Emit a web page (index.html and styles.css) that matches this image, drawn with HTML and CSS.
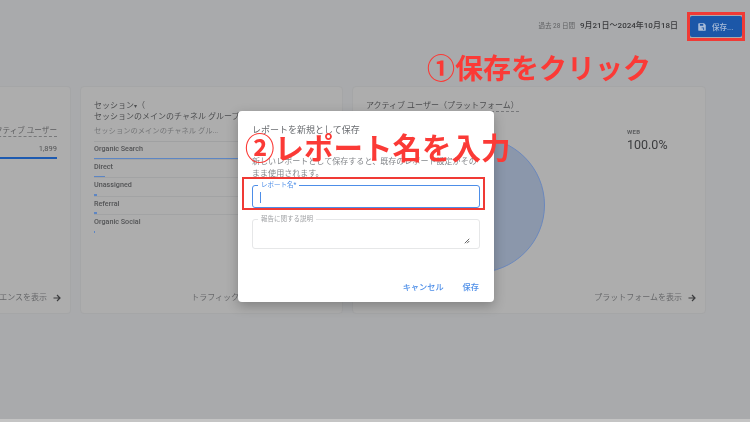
FILE: index.html
```html
<!DOCTYPE html>
<html lang="ja">
<head>
<meta charset="utf-8">
<title>レポートを新規として保存</title>
<link rel="stylesheet" href="styles.css">
</head>
<body>
<div class="page">
  <header class="top">
    <span class="range-label">過去 28 日間</span>
    <span class="range-value">9月21日～2024年10月18日</span>
    <div class="save-outline">
      <button class="save-btn">
        <svg class="save-icon" viewBox="0 0 24 24"><path d="M3 5a2 2 0 0 1 2-2h12l4 4v12a2 2 0 0 1-2 2H5a2 2 0 0 1-2-2z" fill="#a9bcd8"/><path d="M7 5h8v4H7zM11 13h6v6h-2v-4h-4z" fill="#1c57a8"/></svg>
        <span>保存...</span>
      </button>
    </div>
  </header>
  <main class="cards">
    <section class="card card-a">
      <div class="a-head">アクティブ ユーザー</div>
      <div class="a-value">1,899</div>
      <div class="a-bar"></div>
      <div class="card-foot"><span>オーディエンスを表示</span><svg class="arrow" viewBox="0 0 8 8"><path d="M.5 4h6M4 1l3 3-3 3" fill="none" stroke="#3c3d3f" stroke-width="1.2"/></svg></div>
    </section>
    <section class="card card-b">
      <h2 class="b-title">セッション<span class="caret">▾</span>（<br>セッションのメインのチャネル グループ</h2>
      <div class="b-sub">セッションのメインのチャネル グル...</div>
      <ul class="rows">
        <li class="row"><span>Organic Search</span><i class="bar bar-1"></i></li>
        <li class="row"><span>Direct</span><i class="bar bar-2"></i></li>
        <li class="row"><span>Unassigned</span><i class="bar bar-3"></i></li>
        <li class="row"><span>Referral</span><i class="bar bar-3"></i></li>
        <li class="row"><span>Organic Social</span><i class="bar bar-4"></i></li>
      </ul>
      <div class="card-foot"><span>トラフィック獲得のレポートを表示</span><svg class="arrow" viewBox="0 0 8 8"><path d="M.5 4h6M4 1l3 3-3 3" fill="none" stroke="#3c3d3f" stroke-width="1.2"/></svg></div>
    </section>
    <section class="card card-c">
      <h2 class="c-title">アクティブ ユーザー（プラットフォーム）</h2>
      <div class="c-body">
        <div class="pie"></div>
        <div class="legend"><div class="legend-key">WEB</div><div class="legend-val">100.0%</div></div>
      </div>
      <div class="card-foot"><span>プラットフォームを表示</span><svg class="arrow" viewBox="0 0 8 8"><path d="M.5 4h6M4 1l3 3-3 3" fill="none" stroke="#3c3d3f" stroke-width="1.2"/></svg></div>
    </section>
  </main>
</div>
<div class="strip"></div>

<div class="dialog">
  <h1 class="d-title">レポートを新規として保存</h1>
  <p class="d-text">新しいレポートとして保存すると、既存のレポート設定がそのまま使用されます。</p>
  <div class="field field-name">
    <label class="f-label f-active">レポート名*</label>
    <span class="cursor"></span>
  </div>
  <div class="field field-desc">
    <label class="f-label">報告に関する説明</label>
    <svg class="grip" viewBox="0 0 8 8"><path d="M7 1 1 7M7 4 4 7" stroke="#555" stroke-width="1.2"/></svg>
  </div>
  <div class="d-actions"><span>キャンセル</span><span>保存</span></div>
</div>

<div class="note note-1">①保存をクリック</div>
<div class="note note-2">②レポート名を入力</div>
<div class="box box-name"></div>
</body>
</html>
```
FILE: styles.css
```css
* { box-sizing: border-box; }
html, body { margin: 0; height: 100%; overflow: hidden; }
html { background: #a9aaac; }
body {
  width: 750px; height: 422px; position: relative;
  background: #a9aaac;
  font-family: Roboto, "Noto Sans CJK JP", sans-serif;
  color: #3f4042;
  filter: blur(.35px);
}
.page { height: 419px; }
.strip { height: 3px; background: #c4c4c4; }

.top {
  height: 86px; padding: 12px 5px 0 0;
  display: flex; justify-content: flex-end; align-items: flex-start;
}
.range-label { font-size: 6.5px; line-height: 28px; color: #5f6062; margin-right: 5px; }
.range-value { font-size: 8px; line-height: 28px; font-weight: 500; color: #38393b; margin-right: 9px; }
.save-outline { border: 3px solid #f03a35; padding: 1px 0; width: 58px; height: 29px; }
.save-btn {
  width: 52px; height: 21px; border: 0; border-radius: 2px; padding: 0 0 0 7px;
  background: #1c57a8; color: #a9bcd8;
  display: flex; align-items: center; gap: 5px;
  font: 500 7.5px Roboto, "Noto Sans CJK JP", sans-serif;
}
.save-icon { width: 10px; height: 10px; }

.cards { display: flex; gap: 9px; }
.card {
  height: 228px; background: #adadad; border: 1px solid #a5a6a7; border-radius: 4px;
  position: relative; flex: none;
}
.card-a { width: 72px; margin-left: -1px; border-left: 0; border-radius: 0 4px 4px 0; overflow: hidden; }
.card-b { width: 263px; padding: 13px 13px; }
.card-c { width: 354px; padding: 13px 13px; }

.a-head {
  position: absolute; right: 13px; top: 38px; white-space: nowrap;
  font-size: 7.6px; line-height: 11px; color: #5c5d5f; border-bottom: 1px dashed #77787a;
}
.a-value { position: absolute; right: 13px; top: 57px; font-size: 7.5px; line-height: 10px; color: #525355; }
.a-bar { position: absolute; left: 0; right: 13px; top: 70px; height: 1.5px; background: #1d5ab0; }
.card-foot {
  position: absolute; right: 9px; bottom: 9px; white-space: nowrap;
  display: flex; align-items: center; gap: 6px;
  font-size: 8px; line-height: 12px; color: #68696b;
}
.arrow { width: 8px; height: 8px; }

.b-title { margin: 0; font-size: 8px; font-weight: 400; line-height: 11px; color: #4c4d4f; white-space: nowrap; }
.caret { font-size: 6px; }
.b-sub { font-size: 7.3px; line-height: 11px; margin-top: 3px; padding-bottom: 5px; color: #747577; border-bottom: 1px solid #a0a1a2; }
.rows { list-style: none; margin: 0; padding: 0; }
.row {
  height: 18.2px; padding-top: 2px; position: relative;
  font-size: 7.2px; font-weight: 500; line-height: 10px; color: #525355;
  border-bottom: 1px solid #a2a3a4;
}
.row:last-child { border-bottom: 0; }
.bar { position: absolute; left: 0; bottom: 0; height: 1.5px; background: #5d86c4; display: block; }
.bar-1 { width: 240px; }
.bar-2 { width: 11px; }
.bar-3 { width: 2.5px; }
.bar-4 { width: 1px; }

.c-title {
  margin: 0; width: fit-content; font-size: 8px; font-weight: 400; line-height: 11px;
  color: #4c4d4f; border-bottom: 1px dashed #77787a; white-space: nowrap;
}
.c-body { position: relative; }
.pie {
  position: absolute; left: 43px; top: 25px; width: 136px; height: 136px; border-radius: 50%;
  background: #8b97ab; border: 1px solid #6b88bd;
}
.legend { position: absolute; left: 261px; top: 16px; }
.legend-key { font-size: 6px; font-weight: 700; line-height: 8px; color: #5e5f61; letter-spacing: .3px; }
.legend-val { font-size: 12.5px; line-height: 15px; margin-top: 1px; color: #3c3d3f; }

.dialog {
  position: absolute; left: 238px; top: 111px; width: 256px; height: 191px;
  background: #fff; border-radius: 4px; padding: 13px 14px 0;
  box-shadow: 0 4px 12px rgba(0,0,0,.25);
}
.d-title { margin: 0; font-size: 9px; font-weight: 400; line-height: 12px; color: #6a6d71; }
.d-text { margin: 20px -2px 0 0; font-size: 8.05px; line-height: 11.5px; color: #85888c; }
.field { position: relative; border-radius: 3px; }
.field-name { height: 23px; margin-top: 6px; border: 1.5px solid #4d8ee8; }
.field-desc { height: 30px; margin-top: 11px; border: 1px solid #e6e7e8; }
.f-label {
  position: absolute; left: 5px; top: -5px; padding: 0 3px; background: #fff;
  font-size: 6.5px; line-height: 8px; color: #a0a2a5;
}
.f-active { color: #4d8ee8; top: -5px; }
.cursor { position: absolute; left: 7px; top: 6px; width: 1px; height: 11px; background: #4d8ee8; }
.grip { position: absolute; right: 9px; bottom: 4px; width: 6px; height: 6px; }
.d-actions {
  display: flex; justify-content: flex-end; gap: 19px; margin-top: 32px; padding-right: 1px;
  font-size: 8.2px; font-weight: 500; line-height: 12px; color: #4d8ee8;
}

.note {
  position: absolute; white-space: nowrap;
  font-family: "Noto Sans CJK JP", sans-serif; font-weight: 700; color: #fb3a36;
}
.note-1 { left: 427px; top: 47px; font-size: 28px; line-height: 40px; }
.note-2 { left: 245px; top: 125px; font-size: 29.5px; line-height: 42px; }
.box { position: absolute; border: 2.5px solid #f03a35; }
.box-name { left: 242px; top: 177px; width: 243px; height: 33px; }
```
